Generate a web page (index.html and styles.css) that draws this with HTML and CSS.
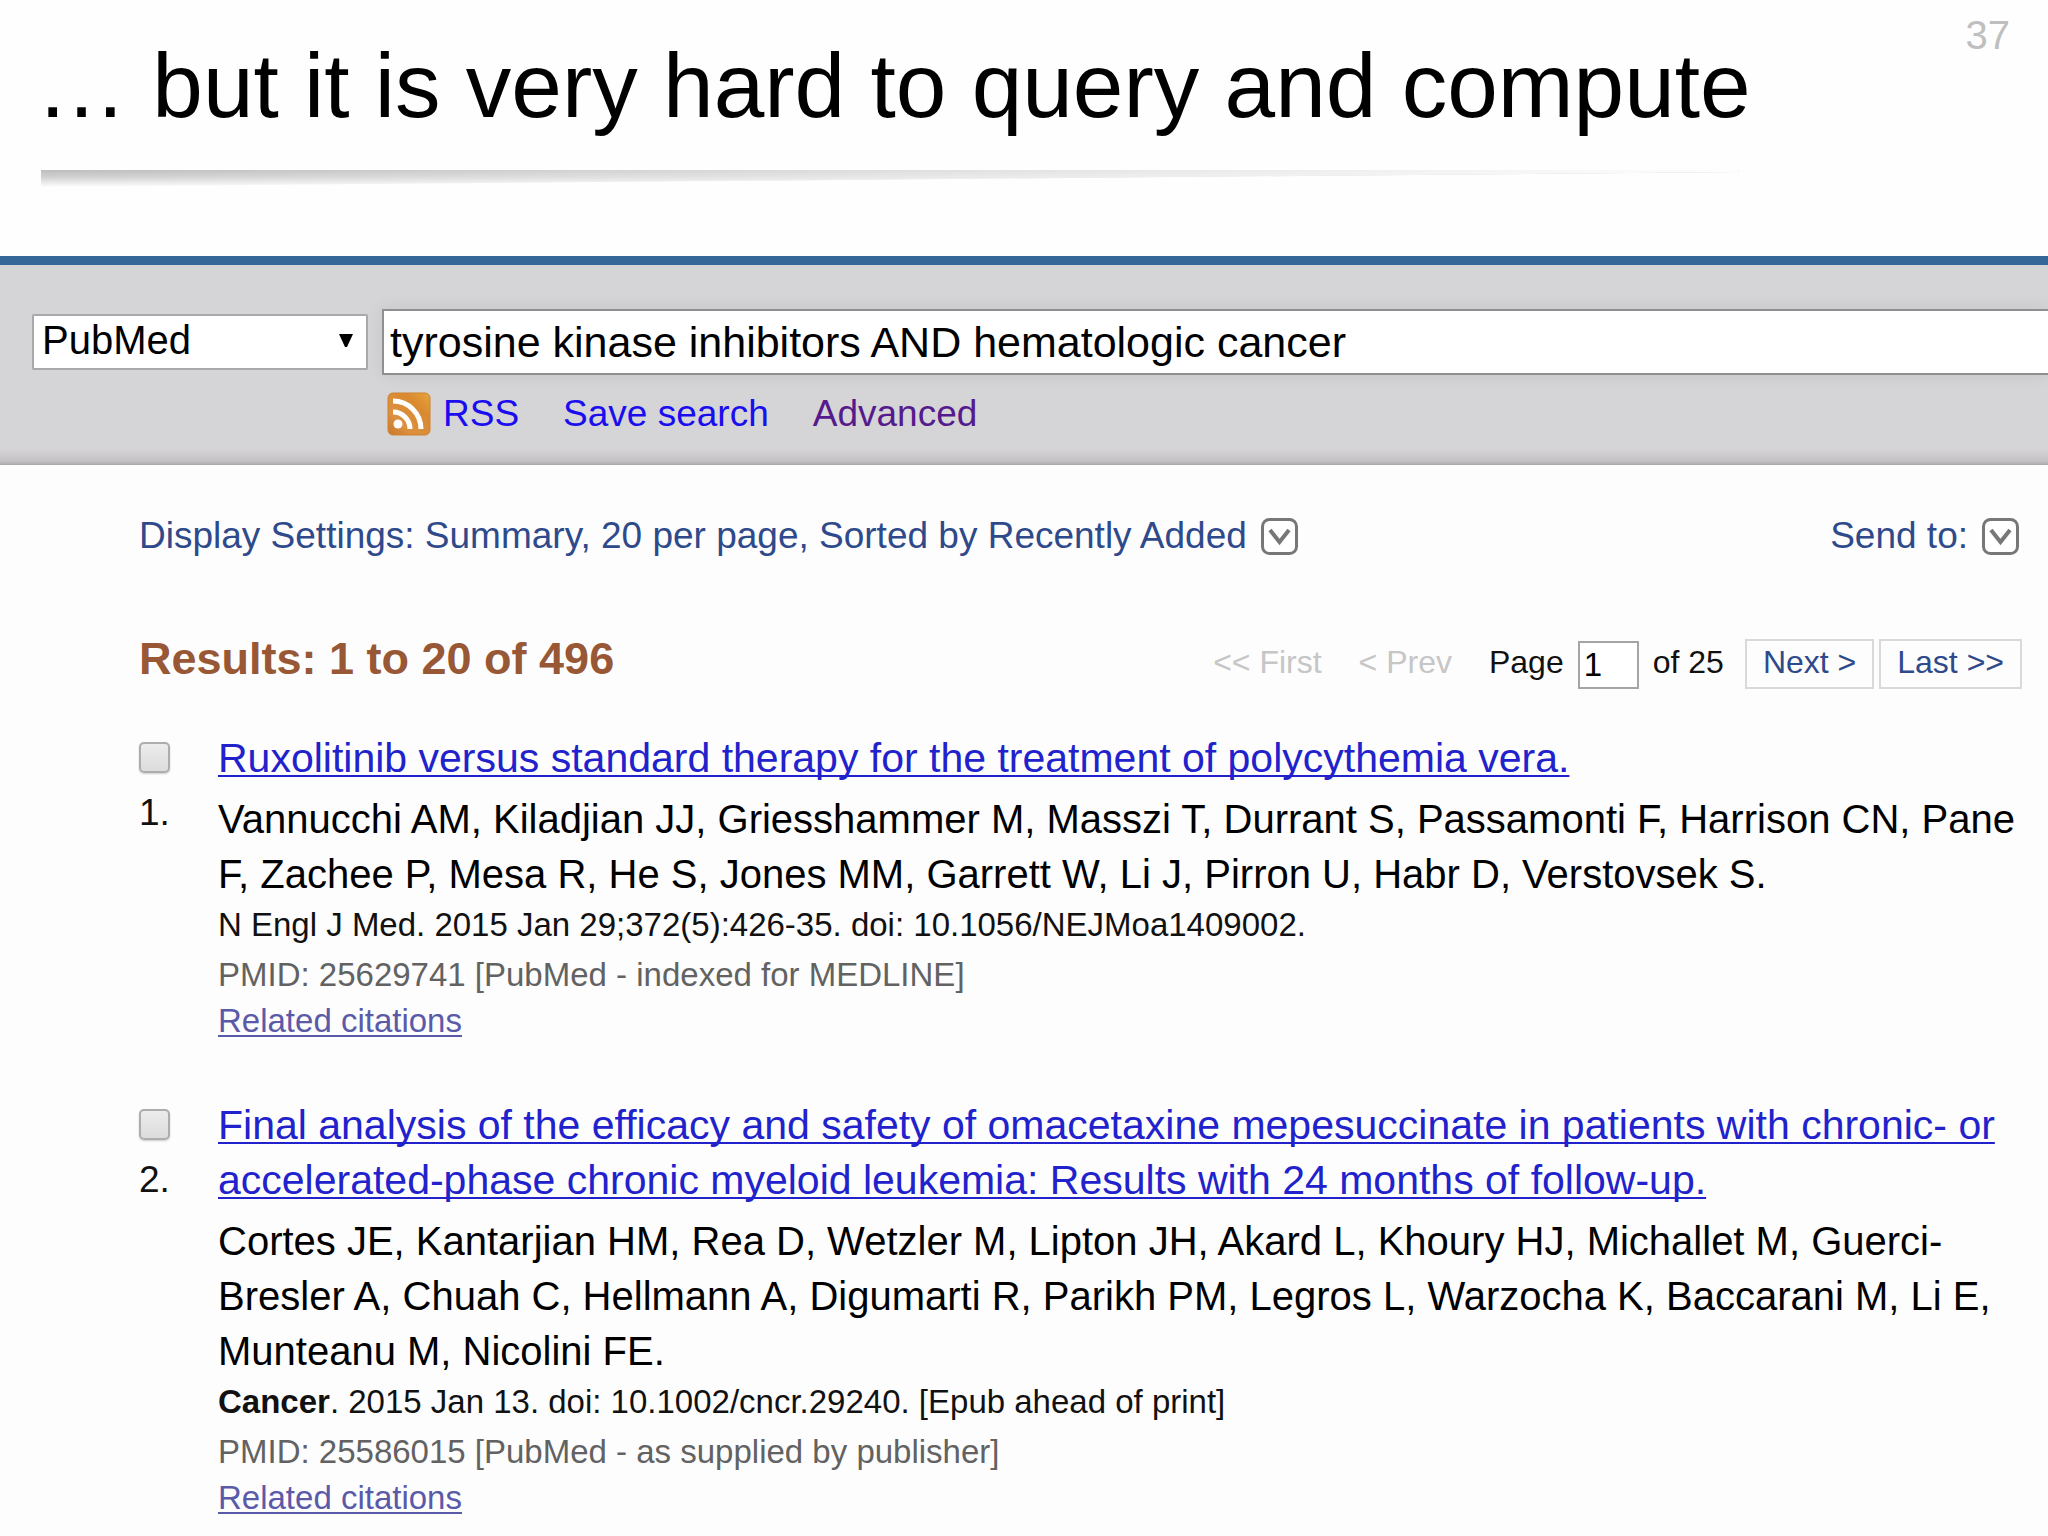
FILE: index.html
```html
<!DOCTYPE html>
<html lang="en">
<head>
    <meta charset="UTF-8">
    <meta name="viewport" content="width=device-width, initial-scale=1.0">
    <title>… but it is very hard to query and compute</title>
    <link rel="stylesheet" href="styles.css">
</head>
<body>
    <header class="slide-header">
        <div class="slide-top">
            <h1>… but it is very hard to query and compute</h1>
            <span class="slide-number">37</span>
        </div>
        <div class="slide-rule"></div>
    </header>

    <form class="search-bar">
        <div class="database">
            <select class="database-select" aria-label="Database">
                <option>PubMed</option>
            </select>
            <svg class="database-arrow" viewBox="0 0 14 14" aria-hidden="true"><path d="M0 1h14L8 14H6z"/></svg>
        </div>
        <div class="search-main">
            <input class="search-input" type="text" aria-label="Search term" value="tyrosine kinase inhibitors AND hematologic cancer">
            <nav class="search-links">
                <a class="rss" href="#">
                    <svg class="rss-icon" viewBox="0 0 44 44" aria-hidden="true">
                        <defs>
                            <linearGradient id="rss-fill" x1="0" y1="1" x2="1" y2="0">
                                <stop offset="0" stop-color="#c8792b"/>
                                <stop offset="0.3" stop-color="#dc9040"/>
                                <stop offset="0.7" stop-color="#d98a30"/>
                                <stop offset="1" stop-color="#e8a53c"/>
                            </linearGradient>
                        </defs>
                        <rect x="1" y="1" width="42" height="42" rx="5" fill="url(#rss-fill)" stroke="#cf832f"/>
                        <circle cx="11" cy="32" r="4.5" fill="#fff"/>
                        <path d="M6 20a17 17 0 0 1 17 17M6 9a28 28 0 0 1 28 28" fill="none" stroke="#fff" stroke-width="5"/>
                    </svg>
                    RSS
                </a>
                <a href="#">Save search</a>
                <a class="visited" href="#">Advanced</a>
            </nav>
        </div>
    </form>

    <main class="content">
        <div class="settings">
            <a href="#">
                Display Settings: Summary, 20 per page, Sorted by Recently Added
                <svg class="toggle" viewBox="0 0 37 37" aria-hidden="true">
                    <rect x="1.5" y="1.5" width="34" height="34" rx="7"/>
                    <path d="M9 12l9.5 12L28 12"/>
                </svg>
            </a>
            <a href="#">
                Send to:
                <svg class="toggle" viewBox="0 0 37 37" aria-hidden="true">
                    <rect x="1.5" y="1.5" width="34" height="34" rx="7"/>
                    <path d="M9 12l9.5 12L28 12"/>
                </svg>
            </a>
        </div>

        <div class="results-bar">
            <h2>Results: 1 to 20 of 496</h2>
            <div class="pager">
                <button class="page-off" type="button" disabled>&lt;&lt; First</button>
                <button class="page-off" type="button" disabled>&lt; Prev</button>
                <div class="page-current">
                    <label for="page">Page</label>
                    <input id="page" type="text" value="1">
                    <span>of 25</span>
                </div>
                <div class="page-on">
                    <a href="#">Next &gt;</a>
                    <a href="#">Last &gt;&gt;</a>
                </div>
            </div>
        </div>

        <div class="results">
            <article class="result">
                <div class="result-pick">
                    <input id="pick-1" type="checkbox">
                    <label for="pick-1">1.</label>
                </div>
                <div class="result-body">
                    <a class="result-title" href="#">Ruxolitinib versus standard therapy for the treatment of polycythemia vera.</a>
                    <p class="authors">Vannucchi AM, Kiladjian JJ, Griesshammer M, Masszi T, Durrant S, Passamonti F, Harrison CN, Pane F, Zachee P, Mesa R, He S, Jones MM, Garrett W, Li J, Pirron U, Habr D, Verstovsek S.</p>
                    <p class="journal">N Engl J Med. 2015 Jan 29;372(5):426-35. doi: 10.1056/NEJMoa1409002.</p>
                    <p class="pmid">PMID: 25629741 [PubMed - indexed for MEDLINE]</p>
                    <a class="related" href="#">Related citations</a>
                </div>
            </article>

            <article class="result">
                <div class="result-pick">
                    <input id="pick-2" type="checkbox">
                    <label for="pick-2">2.</label>
                </div>
                <div class="result-body">
                    <a class="result-title" href="#">Final analysis of the efficacy and safety of omacetaxine mepesuccinate in patients with chronic- or accelerated-phase chronic myeloid leukemia: Results with 24 months of follow-up.</a>
                    <p class="authors">Cortes JE, Kantarjian HM, Rea D, Wetzler M, Lipton JH, Akard L, Khoury HJ, Michallet M, Guerci-Bresler A, Chuah C, Hellmann A, Digumarti R, Parikh PM, Legros L, Warzocha K, Baccarani M, Li E, Munteanu M, Nicolini FE.</p>
                    <p class="journal"><b>Cancer</b>. 2015 Jan 13. doi: 10.1002/cncr.29240. [Epub ahead of print]</p>
                    <p class="pmid">PMID: 25586015 [PubMed - as supplied by publisher]</p>
                    <a class="related" href="#">Related citations</a>
                </div>
            </article>
        </div>
    </main>
</body>
</html>
```
FILE: styles.css
```css
* {
    box-sizing: border-box;
}

body {
    margin: 0;
    font-family: "Liberation Sans", Arial, sans-serif;
    font-size: 33px;
    line-height: 46px;
    color: #111;
    background-color: #fdfdfd;
}

h1, h2, p {
    margin: 0;
}

input, select, button {
    font-family: inherit;
    border-radius: 0;
}

/* Slide heading */
.slide-header {
    padding: 12px 38px 69px 36px;
    background-color: #fefefe;
}

.slide-top {
    display: flex;
    justify-content: space-between;
    align-items: flex-start;
}

h1 {
    padding-top: 22px;
    font-size: 91px;
    font-weight: normal;
    line-height: 104px;
    color: #000;
}

.slide-number {
    font-size: 40px;
    color: #bfbfbf;
}

.slide-rule {
    width: 86%;
    height: 17px;
    margin: 32px 0 0 5px;
    background: linear-gradient(to right, transparent, #fefefe), linear-gradient(#bdbdbd, #d0d0d0 40%, #fefefe);
    clip-path: polygon(0 0, 100% 0, 100% 2px, 0 100%);
}

/* Search bar */
.search-bar {
    display: flex;
    align-items: flex-start;
    gap: 14px;
    padding: 44px 0 28px 32px;
    border-top: 9px solid #366799;
    background: linear-gradient(to top, #aaa8aa, #c4c2c4 4px, #d5d4d6 16px);
}

.database {
    position: relative;
    width: 336px;
    margin-top: 5px;
}

.database-select {
    display: block;
    width: 100%;
    height: 56px;
    padding: 0 8px 4px;
    font-size: 40px;
    color: #000;
    background-color: #fff;
    border: 2px solid #a9a9ab;
    border-radius: 2px;
    appearance: none;
}

.database-arrow {
    position: absolute;
    top: 19px;
    right: 15px;
    width: 14px;
    height: 14px;
    pointer-events: none;
}

.search-main {
    flex: 1;
}

.search-input {
    display: block;
    width: 100%;
    height: 66px;
    padding: 0 6px;
    font-size: 43px;
    color: #000;
    background-color: #fff;
    border: 2px solid #8f8f91;
    border-right: none;
    box-shadow: 0 0 16px rgba(0, 0, 0, 0.08);
}

.search-links {
    display: flex;
    gap: 44px;
    margin-top: 16px;
    padding-left: 5px;
    font-size: 37px;
}

.search-links a {
    color: #1a0dee;
    text-decoration: none;
}

.search-links .visited {
    color: #551a8b;
}

.rss {
    display: flex;
    align-items: center;
    gap: 12px;
}

.rss-icon {
    width: 44px;
    height: 44px;
}

/* Display settings */
.content {
    padding: 48px 26px 5px 139px;
}

.settings {
    display: flex;
    justify-content: space-between;
    padding-right: 3px;
    font-size: 37px;
}

.settings a {
    display: flex;
    align-items: center;
    gap: 14px;
    color: #2f4a8b;
    text-decoration: none;
}

.toggle {
    width: 37px;
    height: 37px;
    fill: #fff;
    stroke: #777;
    stroke-width: 3;
}

.toggle path {
    fill: none;
    stroke-width: 4;
}

/* Results heading and pager */
.results-bar {
    display: flex;
    justify-content: space-between;
    align-items: flex-start;
    margin-top: 80px;
}

h2 {
    font-size: 45px;
    line-height: 40px;
    color: #985735;
}

.pager {
    display: flex;
    align-items: flex-start;
    font-size: 32px;
}

.page-off {
    margin-right: 37px;
    padding: 0;
    font-size: 32px;
    line-height: 46px;
    color: #c6c6c6;
    background: none;
    border: none;
}

.page-current {
    display: flex;
    gap: 14px;
}

.page-current input {
    width: 61px;
    height: 48px;
    margin-top: 2px;
    padding: 0 4px;
    font-size: 33px;
    color: #000;
    background-color: #fff;
    border: 2px solid #a5a5a7;
}

.page-on {
    display: flex;
    gap: 5px;
    margin-left: 21px;
}

.page-on a {
    padding: 0 16px 4px;
    color: #2f4a8b;
    text-decoration: none;
    border: 2px solid #d9d9dc;
    line-height: 42px;
}

/* Result list */
.results {
    display: grid;
    gap: 54px;
    margin: 42px -6px 0 0;
}

.result {
    display: grid;
    grid-template-columns: 79px 1fr;
}

.result-pick {
    display: flex;
    flex-direction: column;
    align-items: flex-start;
    gap: 17px;
    padding-top: 11px;
    font-size: 37px;
}

.result-pick input {
    width: 31px;
    height: 31px;
    margin: 0;
    background: linear-gradient(#ececec, #dcdcdc);
    border: 2px solid #adadad;
    border-radius: 5px;
    box-shadow: 0 1px 2px rgba(0, 0, 0, 0.2);
    appearance: none;
}

.result-title {
    font-size: 41px;
    line-height: 55px;
    color: #2222cc;
}

.result-title, .related {
    display: block;
    text-decoration-thickness: 2px;
    text-underline-offset: 3px;
    text-decoration-skip-ink: none;
}

.authors {
    margin-top: 6px;
    font-size: 40px;
    line-height: 55px;
    color: #000;
}

.pmid {
    margin-top: 4px;
    color: #626262;
}

.related {
    color: #5a5aa8;
}
```
